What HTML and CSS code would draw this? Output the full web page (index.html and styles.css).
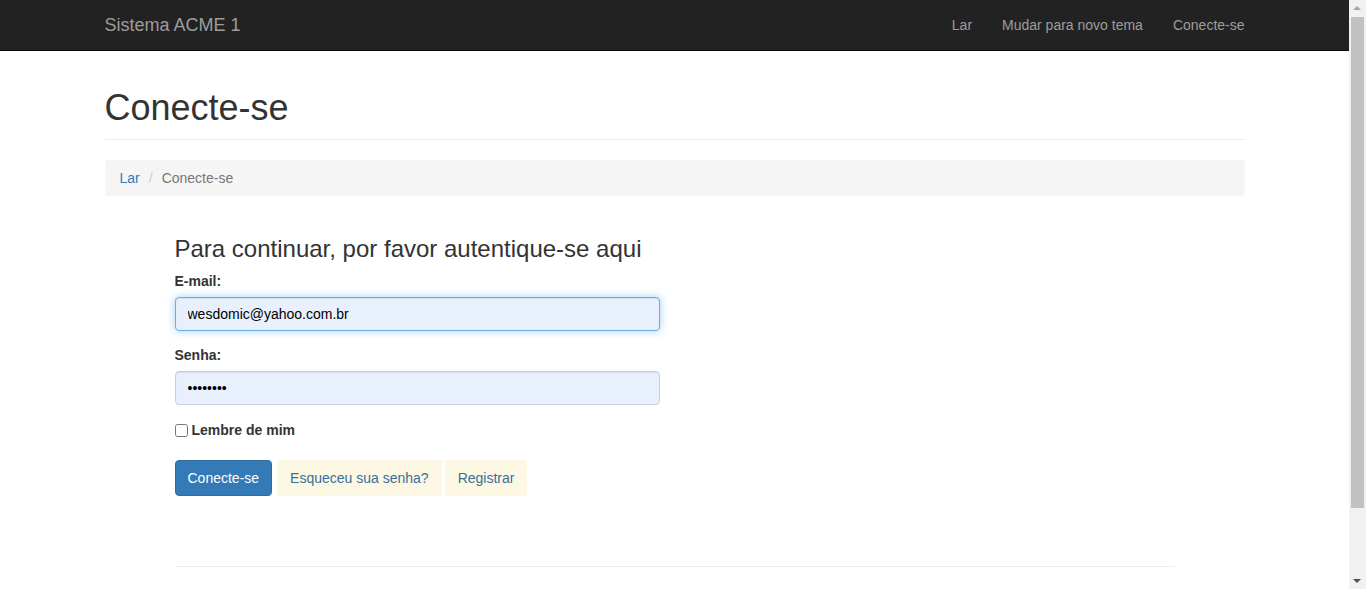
FILE: index.html
```html
<!DOCTYPE html>
<html lang="pt-br">
<head>
<meta charset="utf-8">
<title>Conecte-se - Sistema ACME 1</title>
<link rel="stylesheet" href="styles.css">
</head>
<body>
<div class="page">
  <nav class="navbar">
    <div class="container nav-inner">
      <a class="brand" href="#">Sistema ACME 1</a>
      <ul class="nav-links">
        <li><a href="#">Lar</a></li>
        <li><a href="#">Mudar para novo tema</a></li>
        <li><a href="#">Conecte-se</a></li>
      </ul>
    </div>
  </nav>
  <main class="container">
    <div class="page-header">
      <h1>Conecte-se</h1>
    </div>
    <ol class="breadcrumb">
      <li><a href="#">Lar</a></li>
      <li class="active">Conecte-se</li>
    </ol>
    <section class="login">
      <h3>Para continuar, por favor autentique-se aqui</h3>
      <form class="login-form">
        <div class="form-group">
          <label class="label" for="email">E-mail:</label>
          <input class="form-control focused" id="email" type="text" value="wesdomic@yahoo.com.br">
        </div>
        <div class="form-group">
          <label class="label" for="senha">Senha:</label>
          <input class="form-control" id="senha" type="password" value="12345678">
        </div>
        <div class="checkbox">
          <label><input type="checkbox"> Lembre de mim</label>
        </div>
        <div class="actions">
          <button type="button" class="btn btn-primary">Conecte-se</button>
          <a class="btn btn-soft btn-forgot" href="#">Esqueceu sua senha?</a>
          <a class="btn btn-soft" href="#">Registrar</a>
        </div>
      </form>
      <hr class="divider">
    </section>
  </main>
</div>
<div class="scrollbar" aria-hidden="true">
  <div class="sb-arrow sb-up"></div>
  <div class="sb-track"><div class="sb-thumb"></div></div>
  <div class="sb-arrow sb-down"></div>
</div>
</body>
</html>
```
FILE: styles.css
```css
* {
  box-sizing: border-box;
}
html, body {
  overflow: hidden;
}
body {
  margin: 0;
  font-family: "Liberation Sans", Arial, sans-serif;
  font-size: 14px;
  line-height: 1.42857;
  color: #333;
  background: #fff;
}
.page {
  width: 1349px;
  min-height: 589px;
}
a {
  color: #337ab7;
  text-decoration: none;
}
.container {
  width: 1170px;
  margin: 0 auto;
  padding: 0 15px;
}
.navbar {
  background: #222;
  border-bottom: 1px solid #080808;
  height: 51px;
}
.nav-inner {
  display: flex;
  justify-content: space-between;
  align-items: center;
  height: 50px;
}
.brand {
  color: #9d9d9d;
  font-size: 18px;
  line-height: 20px;
}
.nav-links {
  display: flex;
  list-style: none;
  margin: 0 -15px 0 0;
  padding: 0;
}
.nav-links a {
  display: block;
  padding: 15px;
  line-height: 20px;
  color: #9d9d9d;
}
.page-header {
  margin: 37px 0 20px;
  padding-bottom: 9px;
  border-bottom: 1px solid #eee;
}
.page-header h1 {
  margin: 0 0 2px;
  font-size: 36px;
  font-weight: 500;
  line-height: 1.1;
  color: #333;
}
.breadcrumb {
  display: flex;
  list-style: none;
  margin: 0 0 20px;
  padding: 9px 15px 7px;
  background: #f5f5f5;
  border-radius: 4px;
}
.breadcrumb li + li::before {
  content: "/";
  color: #ccc;
  padding: 0 9px;
}
.breadcrumb .active {
  color: #777;
}
.login {
  padding: 20px 70px 0;
}
.login h3 {
  margin: 0 0 10px;
  font-size: 24px;
  font-weight: 500;
  line-height: 1.1;
}
.login-form {
  width: 485px;
}
.form-group {
  margin-bottom: 15px;
}
.label {
  display: block;
  font-weight: bold;
  margin-bottom: 5px;
}
.form-control {
  display: block;
  width: 100%;
  height: 34px;
  padding: 6px 12px;
  font-family: inherit;
  font-size: 14px;
  color: #000;
  background: #e8f0fe;
  border: 1px solid #c5cfdb;
  border-radius: 4px;
  box-shadow: inset 0 1px 1px rgba(0,0,0,.075);
  outline: none;
}
.form-control.focused {
  border-color: #66afe9;
  box-shadow: inset 0 1px 1px rgba(0,0,0,.075), 0 0 8px rgba(102,175,233,.6);
}
.checkbox {
  margin: 1px 0 20px;
  line-height: 20px;
  font-weight: bold;
}
.checkbox label {
  display: flex;
  align-items: center;
}
.checkbox input {
  width: 13px;
  height: 13px;
  margin: 1px 4px 0 0;
}
.actions {
  display: flex;
}
.btn {
  display: inline-block;
  height: 36px;
  padding: 7px 12px;
  font-family: inherit;
  font-size: 14px;
  line-height: 20px;
  border: 1px solid transparent;
  border-radius: 4px;
  cursor: pointer;
}
.btn-primary {
  color: #fff;
  background: #337ab7;
  border-color: #2e6da4;
  margin-right: 5px;
}
.btn-soft {
  color: #3a6f9c;
  background: #fcf8e3;
  border-radius: 0;
}
.btn-forgot {
  margin-right: 3px;
}
.divider {
  margin: 70px 0 0;
  width: 1000px;
  border: 0;
  border-top: 1px solid #eee;
}
.scrollbar {
  position: fixed;
  top: 0;
  right: 0;
  width: 17px;
  height: 589px;
  background: #f1f1f1;
  display: flex;
  flex-direction: column;
}
.sb-arrow {
  height: 17px;
  flex: none;
  position: relative;
}
.sb-arrow::after {
  content: "";
  position: absolute;
  left: 4px;
  width: 0;
  height: 0;
  border-left: 4px solid transparent;
  border-right: 4px solid transparent;
}
.sb-up::after {
  top: 6px;
  border-bottom: 4px solid #a3a3a3;
}
.sb-down::after {
  top: 7px;
  border-top: 4px solid #505050;
}
.sb-track {
  flex: 1;
  padding: 0 2px;
}
.sb-thumb {
  height: 491px;
  background: #c1c1c1;
}
```
